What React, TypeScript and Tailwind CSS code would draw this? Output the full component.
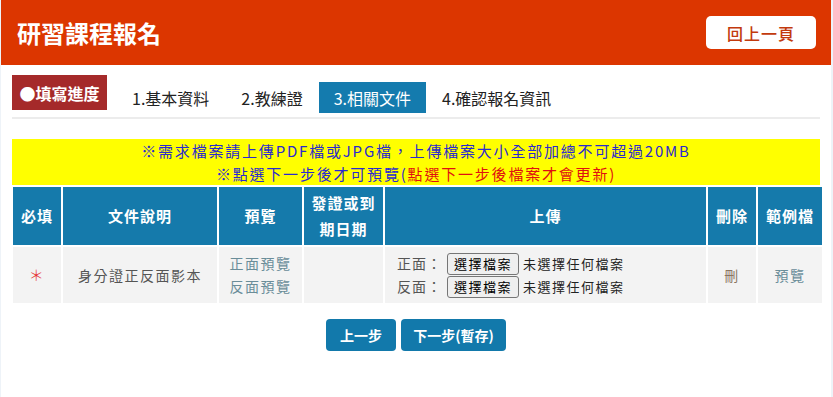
import React from "react";

const steps = ["1.基本資料", "2.教練證", "3.相關文件", "4.確認報名資訊"];

const FilePick: React.FC<{ label: string }> = ({ label }) => (
  <div className="flex items-center h-[23px]">
    <span className="text-[14px] tracking-[1px] text-[#555] w-[50px]">{label}</span>
    <span className="inline-flex items-center h-[22px] px-[6px] border border-[#767676] rounded-[3px] bg-[#efefef] text-[13px] text-black">
      選擇檔案
    </span>
    <span className="ml-[4px] text-[13px] text-[#222]">未選擇任何檔案</span>
  </div>
);

export default function App() {
  const font = { fontFamily: '"Noto Sans CJK TC", "Noto Sans", sans-serif' };
  return (
    <div className="min-h-[397px] bg-[#eef3f8] pl-[1px] pr-[2px]" style={font}>
      <div className="min-h-[397px] bg-white">
        {/* header */}
        <div className="h-[65px] bg-[#dc3600] flex items-center justify-between pl-[16px] pr-[15px]">
          <h1 className="text-white text-[24px] font-bold">研習課程報名</h1>
          <button className="w-[110px] h-[33px] bg-white rounded-[5px] text-[#c23a0d] text-[16px] font-medium tracking-[1px]">
            回上一頁
          </button>
        </div>

        <div className="px-[11px]">
          {/* steps */}
          <div className="flex items-end mt-[10px] pb-[4px] border-b-2 border-[#ececec]">
            <div className="h-[35px] w-[95px] bg-[#a52a2a] text-white font-bold text-[16px] flex items-center justify-center mb-[3px]">
              ●填寫進度
            </div>
            <div className="flex ml-[9px]">
              {steps.map((s, i) => (
                <div
                  key={s}
                  className={
                    i === 2
                      ? "h-[31px] px-[15px] flex items-center text-[16px] bg-[#147bae] text-white"
                      : "h-[31px] px-[16px] flex items-center text-[16px] text-[#222]"
                  }
                >
                  {s}
                </div>
              ))}
            </div>
          </div>

          {/* notice */}
          <div className="mt-[20px] bg-[#ffff00] text-center text-[15px] leading-[23px] tracking-[1.8px] text-[#2a2ad0]">
            <div>※需求檔案請上傳PDF檔或JPG檔，上傳檔案大小全部加總不可超過20MB</div>
            <div>
              ※點選下一步後才可預覽(<span className="text-[#e01010]">點選下一步後檔案才會更新)</span>
            </div>
          </div>

          {/* table */}
          <table className="border-separate border-spacing-[2px] -mx-[1px] w-[813px] text-center">
            <thead>
              <tr className="h-[58px] text-white text-[15px] font-bold tracking-[1px]">
                <th className="w-[48px] bg-[#157aab]">必填</th>
                <th className="w-[154px] bg-[#157aab]">文件說明</th>
                <th className="w-[83px] bg-[#157aab]">預覽</th>
                <th className="w-[79px] bg-[#157aab] leading-[26px]">
                  發證或到
                  <br />
                  期日期
                </th>
                <th className="w-[321px] bg-[#157aab]">上傳</th>
                <th className="w-[48px] bg-[#157aab]">刪除</th>
                <th className="w-[64px] bg-[#157aab]">範例檔</th>
              </tr>
            </thead>
            <tbody>
              <tr className="h-[56px] text-[14px] tracking-[1.5px]">
                <td className="bg-[#f3f3f3] text-[#e53030] text-[15px] font-light">＊</td>
                <td className="bg-[#f3f3f3] text-[#555]">身分證正反面影本</td>
                <td className="bg-[#f3f3f3] text-[#6a8d99] leading-[23px]">
                  <div>正面預覽</div>
                  <div>反面預覽</div>
                </td>
                <td className="bg-[#f3f3f3]"></td>
                <td className="bg-[#f3f3f3] text-left pl-[12px]">
                  <FilePick label="正面：" />
                  <FilePick label="反面：" />
                </td>
                <td className="bg-[#f3f3f3] text-[#8a7560]">刪</td>
                <td className="bg-[#f3f3f3] text-[#6a8d99]">預覽</td>
              </tr>
            </tbody>
          </table>

          {/* actions */}
          <div className="flex justify-center gap-[5px] mt-[14px]">
            <button className="w-[70px] h-[32px] rounded-[4px] bg-[#1279ab] text-white text-[14px] font-bold">
              上一步
            </button>
            <button className="w-[105px] h-[32px] rounded-[4px] bg-[#1279ab] text-white text-[14px] font-bold">
              下一步(暫存)
            </button>
          </div>
        </div>
      </div>
    </div>
  );
}
